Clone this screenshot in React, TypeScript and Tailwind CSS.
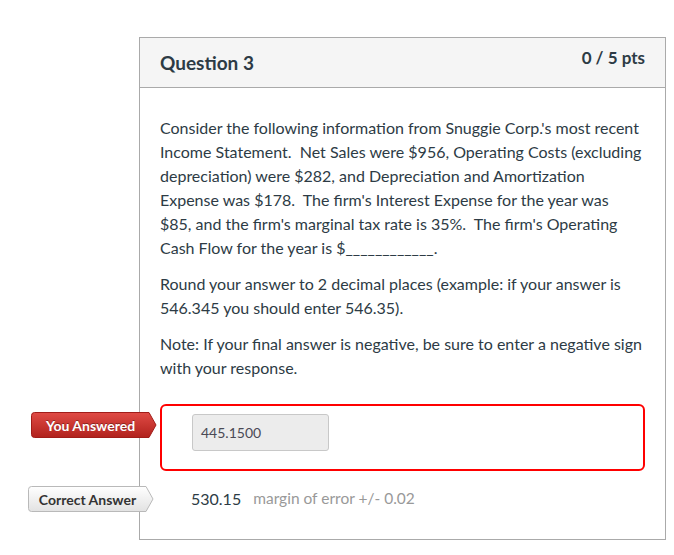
import React from 'react';

const AnswerTag = ({ label, variant }: { label: string; variant: 'wrong' | 'correct' }) => {
  const wrong = variant === 'wrong';
  return (
    <div className="relative w-[126px] h-[26px] flex items-center">
      <svg className="absolute inset-0" width="126" height="26" viewBox="0 0 126 26">
        <defs>
          <linearGradient id={`g-${variant}`} x1="0" y1="0" x2="0" y2="1">
            <stop offset="0" stopColor={wrong ? '#e04b45' : '#ffffff'} />
            <stop offset="1" stopColor={wrong ? '#b1221d' : '#e2e2e2'} />
          </linearGradient>
        </defs>
        <path
          d="M3.5 0.5 H118 L125 13 L118 25.5 H3.5 Q0.5 25.5 0.5 22.5 V3.5 Q0.5 0.5 3.5 0.5 Z"
          fill={`url(#g-${variant})`}
          stroke={wrong ? '#a11d19' : '#b9b9b9'}
          strokeWidth="1"
        />
      </svg>
      <span
        className={
          wrong
            ? 'relative w-[119px] text-center text-[14px] font-bold text-white [text-shadow:0_-1px_0_rgba(0,0,0,0.35)]'
            : 'relative w-[119px] text-center text-[14px] font-bold text-[#333]'
        }
      >
        {label}
      </span>
    </div>
  );
};

export default function App() {
  return (
    <div className="min-h-[555px] bg-white font-['Lato','Noto_Sans',sans-serif] text-[#2d3b45]">
      <div className="ml-[139px] pt-[37px] w-[527px]">
        <div className="border border-[#aaaaaa]">
          {/*header*/}
          <div className="h-[50px] bg-[#f5f5f5] border-b border-[#aaaaaa] px-5 flex justify-between items-start">
            <h2 className="text-[19px] font-bold leading-[50px]">Question 3</h2>
            <div className="text-[17px] font-bold leading-6 mt-[8px]">0 / 5 pts</div>
          </div>

          {/*body*/}
          <div className="px-5 pt-[28px] pb-[27px]">
            <div className="text-[16px] leading-6 w-[482px]">
              <p className="mb-3">
                Consider the following information from Snuggie Corp.'s most recent Income
                Statement.{'\u00a0'} Net Sales were $956, Operating Costs (excluding depreciation)
                were $282, and Depreciation and Amortization Expense was $178.{'\u00a0'} The firm's
                Interest Expense for the year was <br />
                $85, and the firm's marginal tax rate is 35%.{'\u00a0'} The firm's Operating Cash
                Flow for the year is $____________.
              </p>
              <p className="mb-3">
                Round your answer to 2 decimal places (example: if your answer is 546.345 you
                should enter 546.35).
              </p>
              <p>
                Note: If your final answer is negative, be sure to enter a negative sign with
                your response.
              </p>
            </div>

            {/*your answer*/}
            <div className="relative mt-[24px] h-[67px] border-2 border-[#ff0000] rounded-[6px] pl-[30px] pt-[8px]">
              <div className="absolute left-[-131px] top-[6px]">
                <AnswerTag label="You Answered" variant="wrong" />
              </div>
              <div className="w-[137px] h-[37px] bg-[#ececec] border border-[#c8c8c8] rounded-[3px] pl-2 flex items-center text-[14px] text-[#4a4a55]">
                445.1500
              </div>
            </div>

            {/*correct answer*/}
            <div className="relative mt-[15px] h-[26px] flex items-center pl-[31px] text-[16px]">
              <div className="absolute left-[-132px] top-0">
                <AnswerTag label="Correct Answer" variant="correct" />
              </div>
              <span>530.15</span>
              <span className="ml-3 text-[15.5px] text-[#999999]">margin of error +/- 0.02</span>
            </div>
          </div>
        </div>
      </div>
    </div>
  );
}
